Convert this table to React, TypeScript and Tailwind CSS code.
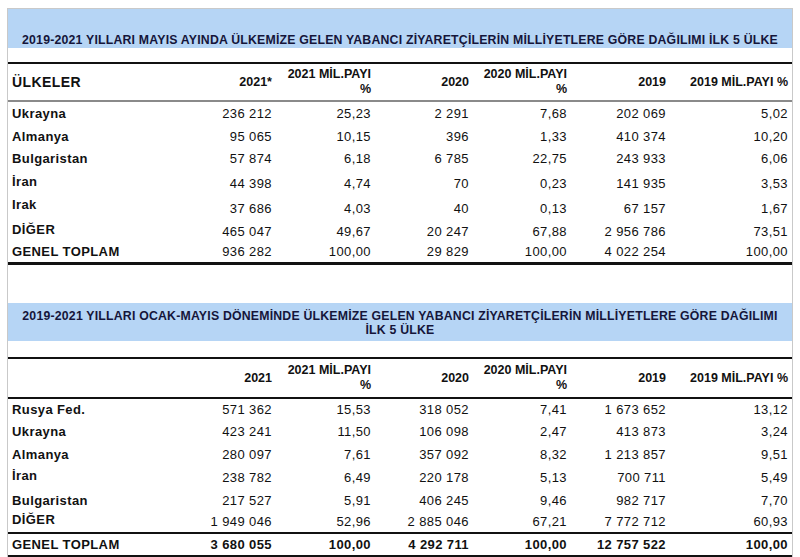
import React from "react";

type Row = {
  name: string;
  v2021: string;
  p2021: string;
  v2020: string;
  p2020: string;
  v2019: string;
  p2019: string;
  h: string;
  lift?: string;
};

const cols = "grid grid-cols-[168px_99px_99px_98px_98px_99px_122px]";

const mayisRows: Row[] = [
  { name: "Ukrayna", v2021: "236 212", p2021: "25,23", v2020: "2 291", p2020: "7,68", v2019: "202 069", p2019: "5,02", h: "h-[24px]" },
  { name: "Almanya", v2021: "95 065", p2021: "10,15", v2020: "396", p2020: "1,33", v2019: "410 374", p2019: "10,20", h: "h-[21px]" },
  { name: "Bulgaristan", v2021: "57 874", p2021: "6,18", v2020: "6 785", p2020: "22,75", v2019: "243 933", p2019: "6,06", h: "h-[24px]" },
  { name: "İran", v2021: "44 398", p2021: "4,74", v2020: "70", p2020: "0,23", v2019: "141 935", p2019: "3,53", h: "h-[25px]", lift: "-translate-y-[2px]" },
  { name: "Irak", v2021: "37 686", p2021: "4,03", v2020: "40", p2020: "0,13", v2019: "67 157", p2019: "1,67", h: "h-[25px]", lift: "-translate-y-[4px]" },
  { name: "DİĞER", v2021: "465 047", p2021: "49,67", v2020: "20 247", p2020: "67,88", v2019: "2 956 786", p2019: "73,51", h: "h-[21px]", lift: "-translate-y-[2px]" },
  { name: "GENEL TOPLAM", v2021: "936 282", p2021: "100,00", v2020: "29 829", p2020: "100,00", v2019: "4 022 254", p2019: "100,00", h: "h-[20px]" },
];

const ocakRows: Row[] = [
  { name: "Rusya Fed.", v2021: "571 362", p2021: "15,53", v2020: "318 052", p2020: "7,41", v2019: "1 673 652", p2019: "13,12", h: "h-[22px]" },
  { name: "Ukrayna", v2021: "423 241", p2021: "11,50", v2020: "106 098", p2020: "2,47", v2019: "413 873", p2019: "3,24", h: "h-[22px]" },
  { name: "Almanya", v2021: "280 097", p2021: "7,61", v2020: "357 092", p2020: "8,32", v2019: "1 213 857", p2019: "9,51", h: "h-[23px]" },
  { name: "İran", v2021: "238 782", p2021: "6,49", v2020: "220 178", p2020: "5,13", v2019: "700 711", p2019: "5,49", h: "h-[24px]", lift: "-translate-y-[2px]" },
  { name: "Bulgaristan", v2021: "217 527", p2021: "5,91", v2020: "406 245", p2020: "9,46", v2019: "982 717", p2019: "7,70", h: "h-[21px]" },
  { name: "DİĞER", v2021: "1 949 046", p2021: "52,96", v2020: "2 885 046", p2020: "67,21", v2019: "7 772 712", p2019: "60,93", h: "h-[21px]", lift: "-translate-y-[2px]" },
];

const ocakTotal: Row = {
  name: "GENEL TOPLAM", v2021: "3 680 055", p2021: "100,00", v2020: "4 292 711", p2020: "100,00", v2019: "12 757 522", p2019: "100,00", h: "h-[21px]",
};

function DataRow({ row, bold }: { row: Row; bold?: boolean }) {
  const num = `text-right pr-[3px] ${bold ? "font-bold" : ""}`;
  return (
    <div className={`${cols} ${row.h} items-center text-[13px] tracking-[0.4px] text-[#111]`}>
      <div className={`pl-[4px] font-bold ${row.lift ?? ""}`}>{row.name}</div>
      <div className={num}>{row.v2021}</div>
      <div className={num}>{row.p2021}</div>
      <div className={num}>{row.v2020}</div>
      <div className={num}>{row.p2020}</div>
      <div className={num}>{row.v2019}</div>
      <div className={num}>{row.p2019}</div>
    </div>
  );
}

function HeaderRow({ first, y2021 }: { first: string; y2021: string }) {
  const h = "text-right pr-[3px] font-bold text-[12.5px] leading-[15px]";
  return (
    <div className={`${cols} items-center text-[#111]`}>
      <div className="pl-[4px] font-bold text-[14px] tracking-[0.4px]">{first}</div>
      <div className={h}>{y2021}</div>
      <div className={h}>
        2021 MİL.PAYI
        <br />%
      </div>
      <div className={h}>2020</div>
      <div className={h}>
        2020 MİL.PAYI
        <br />%
      </div>
      <div className={h}>2019</div>
      <div className={h}>2019 MİL.PAYI %</div>
    </div>
  );
}

export default function App() {
  return (
    <div className="w-[800px] h-[557px] overflow-hidden bg-white font-['Liberation_Sans',Arial,sans-serif]">
      <div className="ml-[7px] mt-[8px] w-[786px] border-x border-t border-[#c9c9c9]">
        {/* Mayıs */}
        <div className="h-[39px] bg-[#b6d5f5] flex items-end justify-center pb-[1px]">
          <div className="text-[12.3px] font-bold text-[#15153a] tracking-[0.2px] leading-[14px] text-center whitespace-nowrap">
            2019-2021 YILLARI MAYIS AYINDA ÜLKEMİZE GELEN YABANCI ZİYARETÇİLERİN MİLLİYETLERE GÖRE DAĞILIMI İLK 5 ÜLKE
          </div>
        </div>
        <div className="h-[14px]" />
        <div className="border-t-2 border-[#111] h-[38px] flex flex-col justify-center">
          <HeaderRow first="ÜLKELER" y2021="2021*" />
        </div>
        <div className="border-t-2 border-[#8a8a8a]" />
        {mayisRows.map((r) => (
          <DataRow key={r.name} row={r} />
        ))}
        <div className="border-t-[3px] border-[#111]" />
        <div className="h-[38px]" />

        {/* Ocak-Mayıs */}
        <div className="h-[38px] bg-[#b6d5f5] flex items-center justify-center pt-[1px]">
          <div className="text-[12.3px] font-bold text-[#15153a] tracking-[0.2px] leading-[14px] text-center whitespace-nowrap">
            2019-2021 YILLARI OCAK-MAYIS DÖNEMİNDE ÜLKEMİZE GELEN YABANCI ZİYARETÇİLERİN MİLLİYETLERE GÖRE DAĞILIMI
            <br />
            İLK 5 ÜLKE
          </div>
        </div>
        <div className="h-[16px]" />
        <div className="border-t-2 border-[#111] h-[40px] flex flex-col justify-center">
          <HeaderRow first="" y2021="2021" />
        </div>
        <div className="border-t-2 border-[#111]" />
        {ocakRows.map((r) => (
          <DataRow key={r.name} row={r} />
        ))}
        <div className="border-t-2 border-[#111]" />
        <DataRow row={ocakTotal} bold />
        <div className="border-t-2 border-[#111]" />
        <div className="h-[10px]" />
      </div>
    </div>
  );
}
